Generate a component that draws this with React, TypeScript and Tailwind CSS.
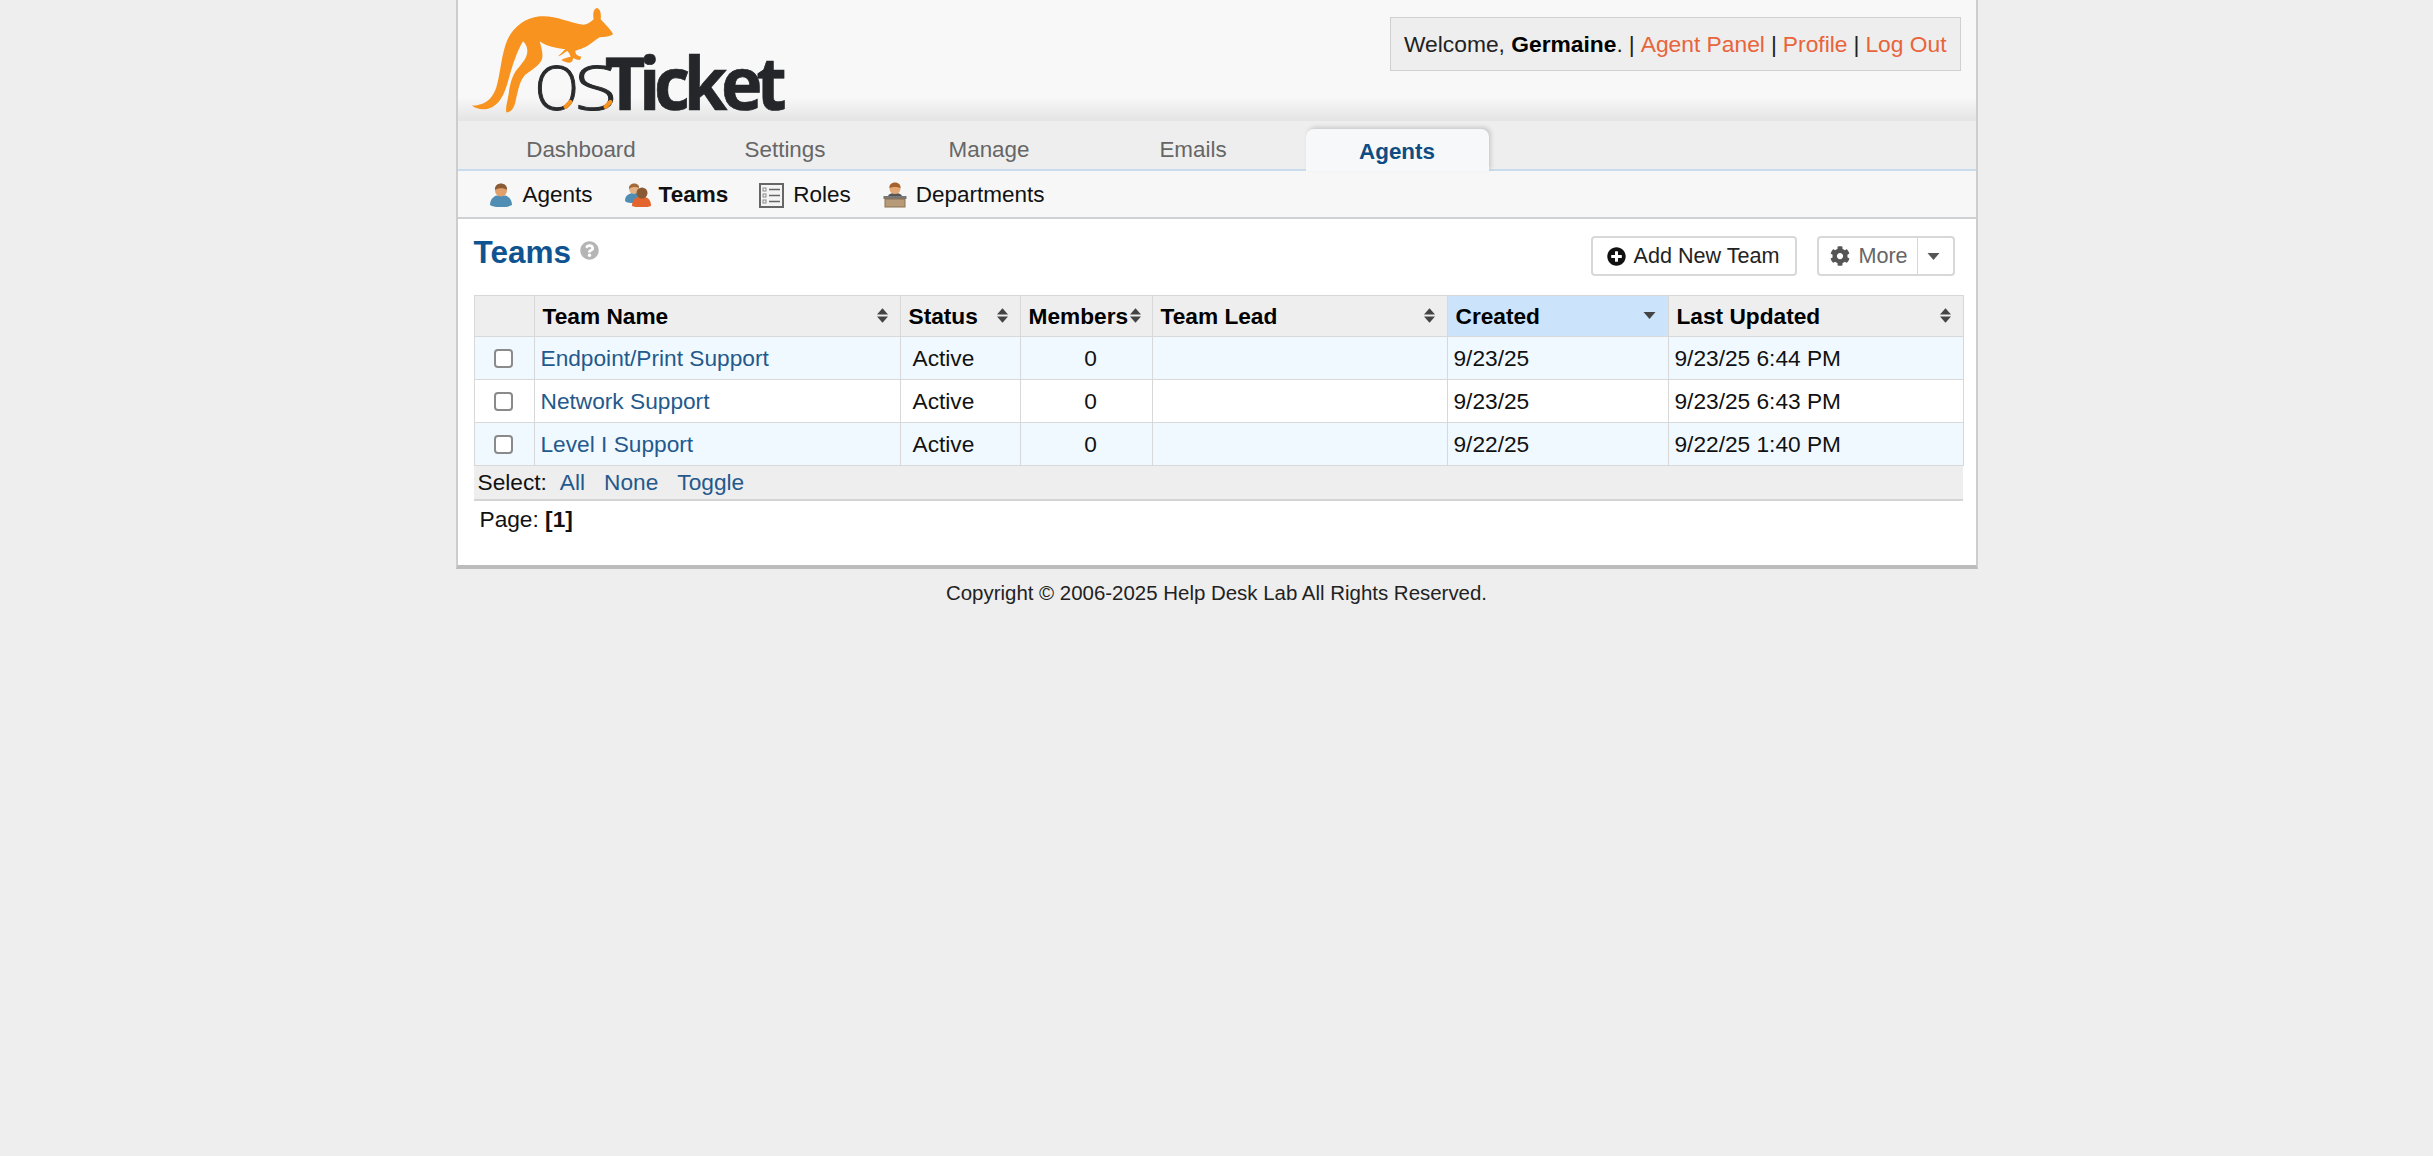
import React from "react";
import { FaCog, FaPlusCircle, FaQuestionCircle } from "react-icons/fa";

const teams = [
  { name: "Endpoint/Print Support", created: "9/23/25", updated: "9/23/25 6:44 PM" },
  { name: "Network Support", created: "9/23/25", updated: "9/23/25 6:43 PM" },
  { name: "Level I Support", created: "9/22/25", updated: "9/22/25 1:40 PM" },
];

const Logo = () => (
  <svg viewBox="0 0 1020 375" className="w-[340px] h-[125px]">
    <g transform="translate(24 12)">
      <path
        fill="#f7931e"
        d="M12 305 C40 305 70 295 85 250 C97 210 100 150 118 108 C135 70 170 42 215 37 C260 33 300 55 345 62 C358 62 368 55 377 46 C374 30 376 15 386 12 C398 14 400 32 398 46 C410 60 428 76 435 90 C428 98 410 98 395 100 C380 108 365 125 345 132 C335 136 328 138 322 140 C322 148 325 155 340 158 L336 168 C328 168 322 166 316 162 C314 170 312 176 304 176 C295 176 286 172 280 168 C290 162 298 160 308 158 C305 150 302 145 298 141 C285 148 280 155 270 157 C280 148 285 142 292 136 C265 132 235 128 215 112 C220 130 226 150 222 165 C215 185 190 198 172 212 C155 228 150 260 142 295 C138 312 130 325 115 325 C112 310 118 295 122 270 C126 240 132 215 148 195 C165 175 178 160 178 140 C178 128 172 118 165 112 C148 140 135 180 122 225 C110 270 95 305 60 314 C40 318 25 314 12 305 Z"
      />
    </g>
    <g fontFamily="'Open Sans', sans-serif" fill="#2a2b2d">
      <text x="224" y="330" fontWeight="300" fontSize="182" stroke="#2a2b2d" strokeWidth="3" textLength="132" lengthAdjust="spacingAndGlyphs">
        O
      </text>
      <text x="344" y="330" fontWeight="300" fontSize="182" stroke="#2a2b2d" strokeWidth="3" textLength="126" lengthAdjust="spacingAndGlyphs">
        S
      </text>
      <text x="434" y="330" fontWeight="700" fontSize="222" letterSpacing="-20" fill="#24262a" stroke="#24262a" strokeWidth="2" textLength="527" lengthAdjust="spacingAndGlyphs">
        Ticket
      </text>
    </g>
    <path d="M317 320 L331 306" stroke="#f7931e" strokeWidth="13" strokeLinecap="round" />
    <path d="M437 320 L451 306" stroke="#f7931e" strokeWidth="13" strokeLinecap="round" />
  </svg>
);

const AgentIcon = () => (
  <svg viewBox="0 0 24 24" className="w-[24px] h-[24px]">
    <path fill="#4f8db5" d="M1 22 C1 16 5 13 8 12.5 L16 12.5 C19 13 23 16 23 22 C18 25 6 25 1 22 Z" />
    <circle cx="12" cy="7.5" r="6" fill="#dfa06c" />
    <path fill="#8a5a34" d="M6 7 C5.5 2.5 9 0.5 12 0.5 C15 0.5 18.5 2.5 18 7 C16 5 9 4.5 6 7 Z" />
  </svg>
);

const TeamIcon = () => (
  <svg viewBox="0 0 26 24" className="w-[26px] h-[24px]">
    <path fill="#4f8db5" d="M0 18 C0 13 3 11 7 10 L13 10 C15 14 13 19 9 20 C5 20 2 20 0 18 Z" />
    <circle cx="9" cy="6" r="5" fill="#e3b184" />
    <path fill="#a56b3a" d="M4 6 C3.5 2 7 0.5 9 0.5 C12 0.5 14.5 2 14 5 C11 3.5 7 3.5 4 6 Z" />
    <path fill="#e4642e" d="M7 23 C7 17 10 14.5 14 14 L20 14 C24 15 26 18 26 23 C21 25 12 25 7 23 Z" />
    <circle cx="17" cy="10" r="5.5" fill="#8a5a34" />
  </svg>
);

const RolesIcon = () => (
  <svg viewBox="0 0 25 25" className="w-[25px] h-[25px]">
    <rect x="1" y="1" width="23" height="23" fill="#f4f4f4" stroke="#666" strokeWidth="2" />
    <g fill="none" stroke="#8a8a8a" strokeWidth="1">
      <rect x="4" y="5" width="3" height="3" />
      <rect x="4" y="11" width="3" height="3" />
      <rect x="4" y="17" width="3" height="3" />
    </g>
    <g stroke="#666" strokeWidth="1.5">
      <path d="M10 6.5 H21" />
      <path d="M10 12.5 H21" />
      <path d="M10 18.5 H21" />
    </g>
  </svg>
);

const DepartmentIcon = () => (
  <svg viewBox="0 0 24 26" className="w-[24px] h-[26px]">
    <path fill="#555" d="M5 15 C5 12 8 11 12 11 C16 11 19 12 19 15 Z" />
    <circle cx="12" cy="6.5" r="5.5" fill="#e3a874" />
    <path fill="#a5622c" d="M6.5 6 C6 2 9.5 0.5 12 0.5 C14.5 0.5 18 2 17.5 6 C15 4.5 9 4.5 6.5 6 Z" />
    <rect x="0.5" y="14" width="23" height="3" fill="#777" />
    <rect x="2" y="17" width="20" height="8" fill="#b79a78" stroke="#8b7355" />
  </svg>
);

const SortIcon = () => (
  <svg viewBox="0 0 12 16" className="w-[11px] h-[15px] shrink-0">
    <path fill="#444" d="M6 0 L12 7 H0 Z" />
    <path fill="#444" d="M6 16 L12 9 H0 Z" />
  </svg>
);

const HeadCell = ({ label, active }: { label: string; active?: boolean }) => (
  <th className={`border border-[#d8d8d8] pl-[8px] pr-[12px] font-bold text-left ${active ? "bg-[#cbe3fb]" : "bg-[#eeeeee]"}`}>
    <div className="flex items-center justify-between">
      <span>{label}</span>
      {active ? (
        <svg viewBox="0 0 12 7" className="w-[13px] h-[7px]">
          <path fill="#444" d="M0 0 H12 L6 7 Z" />
        </svg>
      ) : (
        <SortIcon />
      )}
    </div>
  </th>
);

export default function App() {
  return (
    <div className="min-h-[1156px] bg-[#eeeeee] text-[22.7px] text-black font-['Liberation_Sans',Arial,sans-serif]">
      <div className="mx-auto w-[1522px] bg-white border-x-2 border-b-4 border-x-[#cdcdcd] border-b-[#bcbcbc]">
        <div className="h-[121px] flex justify-between bg-gradient-to-b from-[#f8f8f8] from-[80%] to-[#e4e4e4] pl-[2px] pr-[15px]">
          <Logo />
          <div className="mt-[17px] h-[54px] px-[13px] flex items-center gap-[6px] bg-[#eeeeee] border border-[#d0d0d0] text-[22.8px] text-[#222] whitespace-pre">
            <span>
              Welcome, <b className="text-black">Germaine</b>.
            </span>
            <span>|</span>
            <a className="text-[#e8643a]">Agent Panel</a>
            <span>|</span>
            <a className="text-[#e8643a]">Profile</a>
            <span>|</span>
            <a className="text-[#e8643a]">Log Out</a>
          </div>
        </div>

        <div className="h-[50px] flex items-end gap-[21px] pl-[32px] bg-[#eeeeee] border-b-2 border-[#c9dcee] text-[22.4px] text-[#666]">
          {["Dashboard", "Settings", "Manage", "Emails"].map((t) => (
            <div key={t} className="w-[183px] h-[42px] pt-[3px] flex items-center justify-center">
              {t}
            </div>
          ))}
          <div className="w-[183px] h-[42px] pt-[3px] mb-[-2px] flex items-center justify-center rounded-t-[8px] bg-[#f6f8fa] font-bold text-[#0f4c81] shadow-[2px_-2px_4px_rgba(0,0,0,0.15)]">
            Agents
          </div>
        </div>

        <div className="h-[48px] flex items-center bg-[#f7f7f7] border-b-2 border-[#cfd2d4] pl-[31px] pt-[2px] text-[22.5px] text-[#111]">
          <div className="flex items-center gap-[10px]">
            <AgentIcon />
            Agents
          </div>
          <div className="flex items-center gap-[8px] ml-[32px] font-bold">
            <TeamIcon />
            Teams
          </div>
          <div className="flex items-center gap-[9px] ml-[31px]">
            <RolesIcon />
            Roles
          </div>
          <div className="flex items-center gap-[9px] ml-[32px]">
            <DepartmentIcon />
            Departments
          </div>
        </div>

        <div className="h-[76px] flex justify-between pl-[16px] pr-[21px]">
          <div className="flex items-start pt-[14px] gap-[9px]">
            <h2 className="text-[31.5px] leading-[38px] font-bold text-[#0f5490]">Teams</h2>
            <FaQuestionCircle className="text-[#b5b5b5] text-[19px] mt-[8px]" />
          </div>
          <div className="flex items-start pt-[17px] gap-[20px]">
            <button className="h-[40px] w-[206px] flex items-center justify-center gap-[7px] rounded-[4px] border-2 border-[#d8d8d8] bg-white text-[#222] text-[21.6px]">
              <FaPlusCircle className="text-[#111] text-[19px]" />
              Add New Team
            </button>
            <div className="h-[40px] w-[138px] flex items-stretch rounded-[4px] border-2 border-[#d8d8d8] bg-white text-[21.6px] text-[#666]">
              <div className="flex-1 flex items-center justify-center gap-[8px] pl-[3px] border-r border-[#d8d8d8]">
                <FaCog className="text-[#555] text-[20px]" />
                More
              </div>
              <div className="w-[35px] pr-[4px] flex items-center justify-center">
                <svg viewBox="0 0 12 7" className="w-[13px] h-[7px]">
                  <path fill="#555" d="M0 0 H12 L6 7 Z" />
                </svg>
              </div>
            </div>
          </div>
        </div>

        <div className="pl-[16px] pr-[12px]">
          <table className="w-[1489px] table-fixed border-collapse">
            <colgroup>
              <col className="w-[60px]" />
              <col className="w-[366px]" />
              <col className="w-[120px]" />
              <col className="w-[132px]" />
              <col className="w-[295px]" />
              <col className="w-[221px]" />
              <col className="w-[295px]" />
            </colgroup>
            <thead>
              <tr className="h-[41px]">
                <th className="border border-[#d8d8d8] bg-[#eeeeee]"></th>
                <HeadCell label="Team Name" />
                <HeadCell label="Status" />
                <th className="border border-[#d8d8d8] bg-[#eeeeee] pl-[8px] pr-[11px] font-bold text-left">
                  <div className="flex items-center justify-between">
                    <span>Members</span>
                    <SortIcon />
                  </div>
                </th>
                <HeadCell label="Team Lead" />
                <HeadCell label="Created" active />
                <HeadCell label="Last Updated" />
              </tr>
            </thead>
            <tbody>
              {teams.map((t, i) => (
                <tr key={t.name} className={`h-[43px] ${i % 2 === 0 ? "bg-[#f0f9ff]" : "bg-white"}`}>
                  <td className="border border-[#d8d8d8] pr-[2px]">
                    <input type="checkbox" className="block mx-auto appearance-none w-[19px] h-[19px] rounded-[4px] border-2 border-[#8a8a8a] bg-white" />
                  </td>
                  <td className="border border-[#d8d8d8] px-[6px] text-[#24598c]">{t.name}</td>
                  <td className="border border-[#d8d8d8] px-[12px] text-[#111]">Active</td>
                  <td className="border border-[#d8d8d8] pl-[9px] text-center text-[#111]">0</td>
                  <td className="border border-[#d8d8d8]"></td>
                  <td className="border border-[#d8d8d8] px-[6px] text-[#111]">{t.created}</td>
                  <td className="border border-[#d8d8d8] px-[6px] text-[#111]">{t.updated}</td>
                </tr>
              ))}
            </tbody>
          </table>
          <div className="w-[1489px] h-[35px] flex items-center gap-[19px] pl-[4px] bg-[#eeeeee] border-b-2 border-[#d4d4d4] text-[#111]">
            <span className="mr-[-6px]">Select:</span>
            <a className="text-[#24598c]">All</a>
            <a className="text-[#24598c]">None</a>
            <a className="text-[#24598c]">Toggle</a>
          </div>
          <div className="h-[64px] pl-[6px] pt-[1px] text-[#111]">
            Page: <b>[1]</b>
          </div>
        </div>
      </div>
      <p className="pt-[9px] text-center text-[20.45px] text-[#222]">Copyright © 2006-2025 Help Desk Lab All Rights Reserved.</p>
    </div>
  );
}
